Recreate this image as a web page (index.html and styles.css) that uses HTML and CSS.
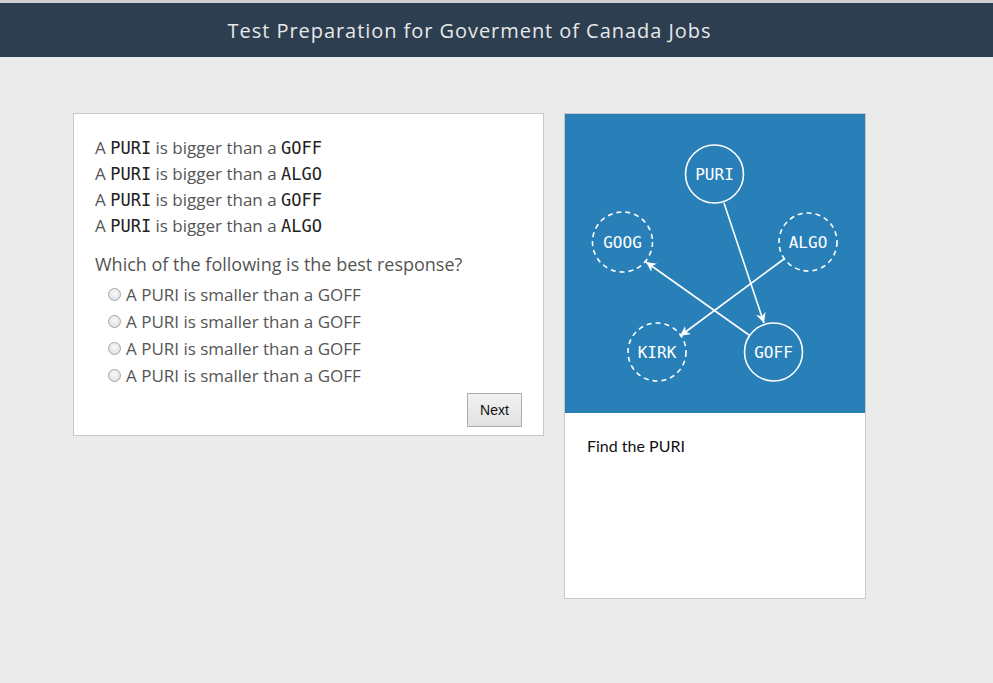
FILE: index.html
```html
<!DOCTYPE html>
<html>
<head>
<meta charset="utf-8">
<link rel="stylesheet" href="styles.css">
</head>
<body>
<div class="topline"></div>
<header class="header"><h1 class="title">Test Preparation for Goverment of Canada Jobs</h1></header>
<main class="main">
  <section class="card question-card">
    <div class="facts">
      <p>A <code>PURI</code> is bigger than a <code>GOFF</code></p>
      <p>A <code>PURI</code> is bigger than a <code>ALGO</code></p>
      <p>A <code>PURI</code> is bigger than a <code>GOFF</code></p>
      <p>A <code>PURI</code> is bigger than a <code>ALGO</code></p>
    </div>
    <p class="prompt">Which of the following is the best response?</p>
    <ul class="options">
      <li><span class="radio"></span>A PURI is smaller than a GOFF</li>
      <li><span class="radio"></span>A PURI is smaller than a GOFF</li>
      <li><span class="radio"></span>A PURI is smaller than a GOFF</li>
      <li><span class="radio"></span>A PURI is smaller than a GOFF</li>
    </ul>
    <div class="actions"><button class="btn">Next</button></div>
  </section>
  <section class="card diagram-card">
    <div class="diagram">
      <svg width="300" height="299" viewBox="565 114 300 299">
        <defs>
          <marker id="ah" viewBox="0 0 10 10" refX="10" refY="5" markerWidth="10" markerHeight="10" markerUnits="userSpaceOnUse" orient="auto">
            <path d="M0,0 L10,5 L0,10 L3,5 Z" fill="#fff"/>
          </marker>
        </defs>
        <g stroke="#fff" stroke-width="1.6" fill="none">
          <line x1="724" y1="203" x2="764" y2="323" marker-end="url(#ah)"/>
          <line x1="784" y1="259" x2="680" y2="336" marker-end="url(#ah)"/>
          <line x1="749" y1="335" x2="646" y2="262" marker-end="url(#ah)"/>
          <circle cx="714.5" cy="174" r="29"/>
          <circle cx="773.5" cy="352" r="29"/>
          <circle cx="622.5" cy="242" r="30" stroke-dasharray="5 4"/>
          <circle cx="808" cy="242" r="29" stroke-dasharray="5 4"/>
          <circle cx="657" cy="352" r="29" stroke-dasharray="5 4"/>
        </g>
        <g class="lbl" fill="#fff" text-anchor="middle">
          <text x="714.5" y="180">PURI</text>
          <text x="773.5" y="358">GOFF</text>
          <text x="622.5" y="248">GOOG</text>
          <text x="808" y="248">ALGO</text>
          <text x="657" y="358">KIRK</text>
        </g>
      </svg>
    </div>
    <p class="caption">Find the PURI</p>
  </section>
</main>
</body>
</html>
```
FILE: styles.css
```css
html, body { margin: 0; padding: 0; }
body { background: #ebebeb; font-family: "Open Sans", sans-serif; width: 993px; height: 683px; overflow: hidden; }
.topline { height: 3px; background: #cfcfcf; }
.header { background: #2c3e50; height: 54px; display: flex; align-items: center; justify-content: center; padding-right: 54px; }
.title { margin: 0; font-family: "Open Sans", sans-serif; font-weight: 400; font-size: 20px; color: #e8e8e8; letter-spacing: 0.95px; }
.main { display: flex; align-items: flex-start; gap: 20px; padding: 56px 0 0 73px; }
.card { background: #fff; border: 1px solid #c8c8c8; box-sizing: border-box; }
.question-card { width: 471px; padding: 21px 21px 8px 21px; color: #555; }
.facts p { margin: 0; font-size: 17px; line-height: 26px; }
code { font-family: "DejaVu Sans Mono", monospace; font-size: 17px; line-height: 1; color: #222; }
.prompt { margin: 12px 0 0; font-size: 18px; line-height: 26px; }
.options { list-style: none; margin: 4px 0 0; padding: 0 0 0 13px; }
.options li { font-size: 17px; line-height: 27px; display: flex; align-items: center; }
.radio { width: 11px; height: 11px; border-radius: 50%; border: 1px solid #a6a6a6; background: radial-gradient(circle at 50% 40%, #fafafa 0%, #e6e6e6 60%, #d2d2d2 100%); margin-right: 5px; box-sizing: content-box; }
.actions { display: flex; justify-content: flex-end; margin-top: 4px; }
.btn { width: 55px; height: 34px; font-family: "Liberation Sans", Arial, sans-serif; font-size: 14px; color: #111; border: 1px solid #adadad; background: linear-gradient(#f2f2f2, #e2e2e2); border-radius: 0; padding: 0; }
.diagram-card { width: 302px; height: 486px; }
.diagram { background: #2980b9; height: 299px; }
.diagram svg { display: block; }
.lbl { font-family: "DejaVu Sans Mono", monospace; font-size: 16px; }
.caption { margin: 23px 0 0 22px; font-family: Lato, sans-serif; font-size: 16px; color: #111; }
```
